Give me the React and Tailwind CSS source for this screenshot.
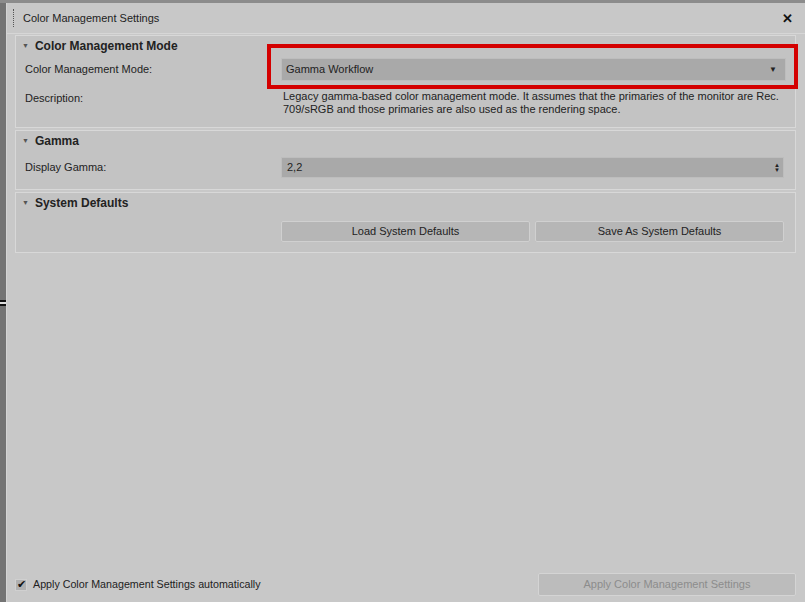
import React from "react";

const font = { fontFamily: '"Liberation Sans", Arial, sans-serif' };

const Panel = ({ title, children, className = "" }) => (
  <div className={`border border-[#d8d8d8] bg-[#c3c3c3] ${className}`}>
    <div className="flex items-center h-[19px] pl-[6px]">
      <span className="text-[7px] text-[#555] mr-[6px] leading-none">▼</span>
      <span className="text-[12px] font-bold text-[#222]">{title}</span>
    </div>
    {children}
  </div>
);

const Row = ({ label, children, className = "" }) => (
  <div className={`grid grid-cols-[265px_1fr] pr-[9px] ${className}`}>
    <div className="pl-[9px] text-[11px] text-[#222]">{label}</div>
    <div>{children}</div>
  </div>
);

const App = () => {
  return (
    <div className="w-[805px] h-[602px] flex flex-col bg-[#7a7a7a] overflow-hidden" style={font}>
      <div className="h-[3px] bg-[#8c8c8c] shrink-0" />
      <div className="flex flex-1 min-h-0">
        <div className="w-[6px] shrink-0 bg-[#747474] flex flex-col">
          <div className="h-[297px]" />
          <div className="h-[2px] bg-[#111]" />
          <div className="h-[2px] bg-[#ddd]" />
          <div className="h-[2px] bg-[#111]" />
        </div>
        <div className="flex-1 flex flex-col bg-[#c8c8c8] border-l border-[#d4d4d4]">
          {/* title bar */}
          <div className="h-[31px] shrink-0 flex items-center border-b border-[#d6d6d6]">
            <div className="ml-[6px] w-[2px] h-[18px] border-l border-dotted border-[#555]" />
            <span className="ml-[8px] text-[11px] text-[#222]">Color Management Settings</span>
            <span className="ml-auto mr-[12px] text-[13px] font-bold text-[#111] leading-none">✕</span>
          </div>

          <div className="flex flex-col gap-[2px] pl-[8px] pt-[1px] pr-[9px]">
            <Panel title="Color Management Mode" className="pb-[11px]">
              <Row label="Color Management Mode:" className="items-center mt-[3px]">
                <div className="relative">
                  <div className="h-[23px] bg-[#a9a9a9] border border-[#bdbdbd] flex items-center pl-[4px] pr-[8px] text-[11px] text-[#222]">
                    <span>Gamma Workflow</span>
                    <span className="ml-auto text-[8px] text-[#222]">▼</span>
                  </div>
                  <div className="absolute -left-[14px] -right-[12px] -top-[14px] -bottom-[8px] border-[4px] border-[#d40000] pointer-events-none" />
                </div>
              </Row>
              <Row label="Description:" className="mt-[9px]">
                <div className="pl-[2px] text-[11px] leading-[13px] text-[#222]">
                  Legacy gamma-based color management mode. It assumes that the primaries of the monitor are Rec. 709/sRGB and those primaries are also used as the rendering space.
                </div>
              </Row>
            </Panel>

            <Panel title="Gamma" className="pb-[11px]">
              <Row label="Display Gamma:" className="items-center mt-[7px] pr-[11px]">
                <div className="h-[21px] bg-[#a9a9a9] border border-[#bdbdbd] flex items-center pl-[5px] pr-[3px] text-[11px] text-[#222]">
                  <span>2,2</span>
                  <span className="ml-auto flex flex-col text-[6px] leading-[5px] text-[#222]">
                    <span>▲</span>
                    <span>▼</span>
                  </span>
                </div>
              </Row>
            </Panel>

            <Panel title="System Defaults" className="pb-[10px]">
              <Row label="" className="mt-[9px] pr-[11px]">
                <div className="grid grid-cols-2 gap-[5px]">
                  <div className="h-[21px] rounded-[2px] bg-[#b6b6b6] border border-[#d0d0d0] flex items-center justify-center text-[11px] text-[#222]">
                    Load System Defaults
                  </div>
                  <div className="h-[21px] rounded-[2px] bg-[#b6b6b6] border border-[#d0d0d0] flex items-center justify-center text-[11px] text-[#222]">
                    Save As System Defaults
                  </div>
                </div>
              </Row>
            </Panel>
          </div>

          <div className="mt-auto flex items-center pl-[8px] pr-[9px] pb-[6px]">
            <div className="w-[12px] h-[12px] bg-[#b0b0b0] border border-[#d0d0d0] flex items-center justify-center text-[11px] leading-none text-[#111]">
              ✔
            </div>
            <span className="ml-[6px] text-[10.7px] text-[#222]">Apply Color Management Settings automatically</span>
            <div className="ml-auto w-[258px] h-[23px] rounded-[2px] bg-[#bcbcbc] border border-[#d4d4d4] flex items-center justify-center text-[11px] text-[#8c8c8c]">
              Apply Color Management Settings
            </div>
          </div>
        </div>
      </div>
    </div>
  );
};

export default App;
